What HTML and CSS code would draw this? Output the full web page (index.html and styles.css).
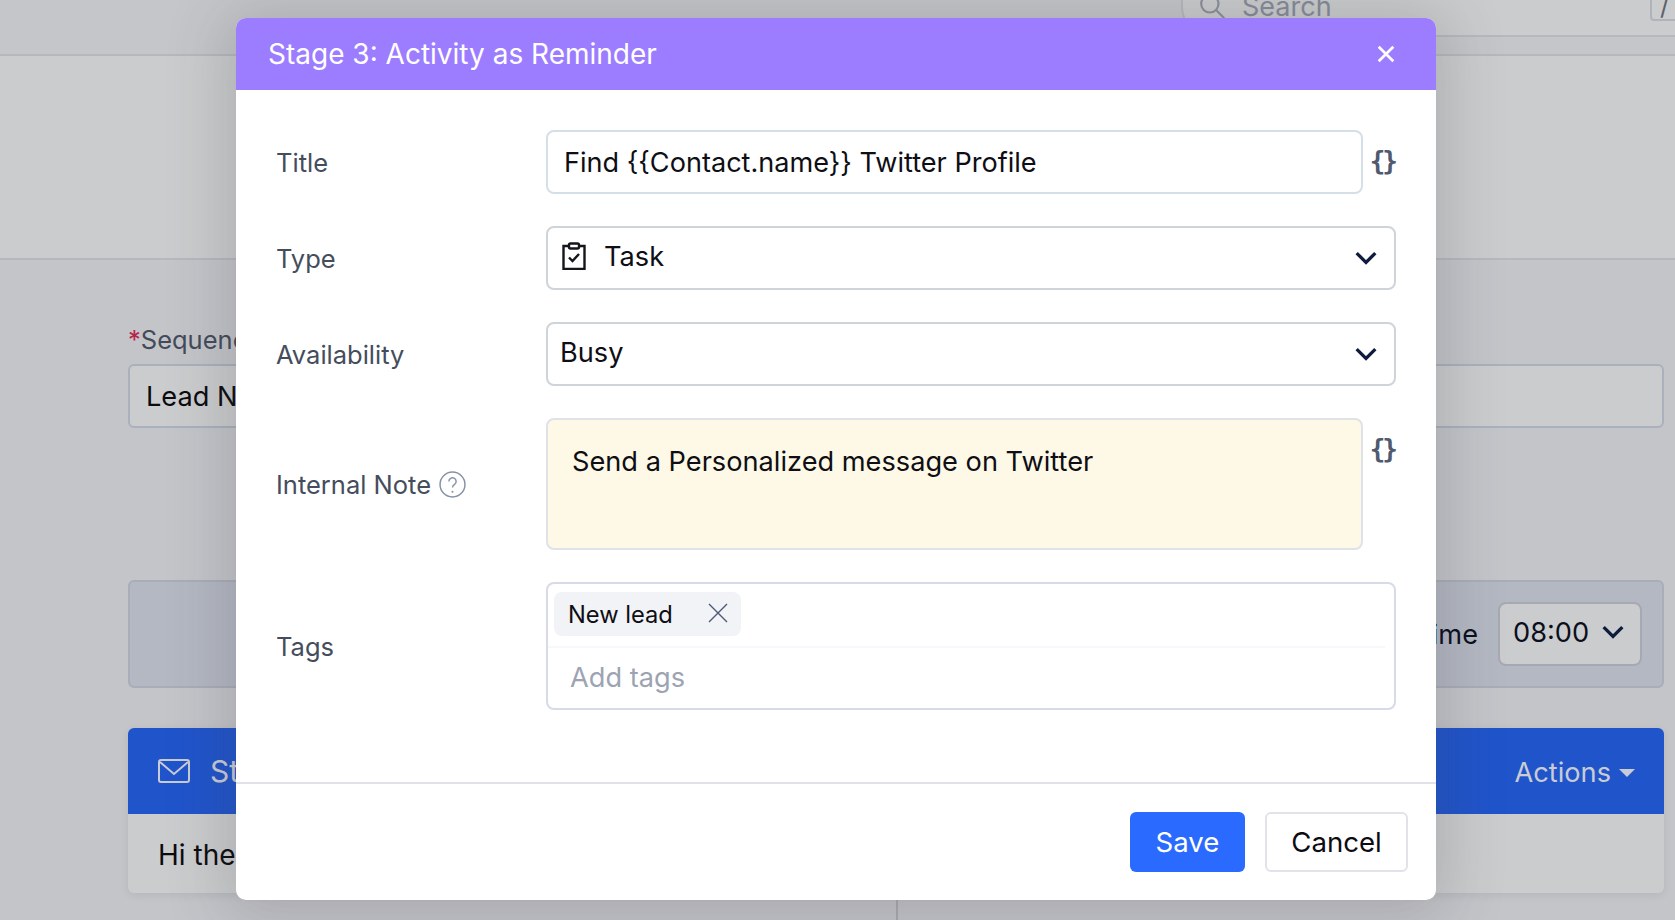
FILE: index.html
```html
<!DOCTYPE html>
<html lang="en">
<head>
<meta charset="utf-8">
<title>Stage 3: Activity as Reminder</title>
<link rel="stylesheet" href="styles.css">
</head>
<body>
<div class="page">
  <header class="topbar">
    <div class="search">
      <svg class="search-icon" viewBox="0 0 24 24"><circle cx="10" cy="10" r="8"/><path d="M16 16l8 8"/></svg>
      <span class="search-text">Search</span>
      <span class="kbd">/</span>
    </div>
  </header>
  <section class="hero"></section>
  <main class="content">
    <div class="seq-label"><span class="req">*</span>Sequence Name</div>
    <div class="seq-input">Lead Nurture</div>
    <div class="time-box">
      <span class="time-label">Time</span>
      <span class="time-select">08:00
        <svg class="chev" viewBox="0 0 20 20"><path d="M1.5 5.5l8.5 8.5 8.5-8.5"/></svg>
      </span>
    </div>
    <div class="card">
      <div class="card-head">
        <svg class="mail" viewBox="0 0 32 24"><rect x="1" y="1" width="30" height="22" rx="2"/><path d="M2 3l14 12L30 3"/></svg>
        <span class="card-title">Step 1</span>
        <span class="actions">Actions<span class="caret"></span></span>
      </div>
      <div class="card-body">Hi there</div>
    </div>
    <div class="divider"></div>
  </main>
</div>

<div class="modal">
  <div class="modal-head">
    <span class="modal-title">Stage 3: Activity as Reminder</span>
    <svg class="close" viewBox="0 0 16 16"><path d="M1.5 1.5l13 13M14.5 1.5l-13 13"/></svg>
  </div>
  <div class="modal-body">
    <div class="row">
      <label class="label">Title</label>
      <div class="field-wrap">
        <div class="field field-title">Find {{Contact.name}} Twitter Profile</div>
        <span class="braces">{}</span>
      </div>
    </div>
    <div class="row">
      <label class="label">Type</label>
      <div class="field field-select">
        <svg class="clip" viewBox="0 0 24 28"><path d="M7 4H1.5v23h21V4H17"/><rect x="7" y="1.5" width="10" height="5" rx="1.5"/><path d="M7 15.5l3.5 3.5 6.5-7"/></svg>
        <span>Task</span>
        <svg class="chev chev-end" viewBox="0 0 20 20"><path d="M1.5 5.5l8.5 8.5 8.5-8.5"/></svg>
      </div>
    </div>
    <div class="row">
      <label class="label">Availability</label>
      <div class="field field-select field-busy">
        <span>Busy</span>
        <svg class="chev chev-end" viewBox="0 0 20 20"><path d="M1.5 5.5l8.5 8.5 8.5-8.5"/></svg>
      </div>
    </div>
    <div class="row row-note">
      <label class="label label-note">Internal Note
        <svg class="help" viewBox="0 0 26 26"><circle cx="13" cy="13" r="12"/><path d="M9.5 10a3.5 3.5 0 1 1 5.5 2.9c-1.3.9-2 1.6-2 3.1"/><circle class="dot" cx="13" cy="20" r="1"/></svg>
      </label>
      <div class="field-wrap field-wrap-top">
        <div class="field field-note">Send a Personalized message on Twitter</div>
        <span class="braces braces-note">{}</span>
      </div>
    </div>
    <div class="row">
      <label class="label">Tags</label>
      <div class="field field-tags">
        <div class="tag-line">
          <span class="tag">New lead
            <svg class="tag-x" viewBox="0 0 20 20"><path d="M1 1l18 18M19 1L1 19"/></svg>
          </span>
        </div>
        <div class="tag-input">Add tags</div>
      </div>
    </div>
  </div>
  <div class="modal-foot">
    <button class="btn btn-save">Save</button>
    <button class="btn btn-cancel">Cancel</button>
  </div>
</div>
</body>
</html>
```

FILE: styles.css
```css
* { box-sizing: border-box; }
html, body { margin: 0; height: 920px; overflow: hidden; }
body { font-family: Inter, "Liberation Sans", sans-serif; background: #c4c5c9; color: #111; position: relative; }
.page { height: 920px; display: flex; flex-direction: column; background: #c4c5c9; }

.topbar { height: 56px; border-bottom: 2px solid #b6b8bd; background: #c5c6c9; padding-left: 1181px; flex: none; }
.search { height: 38px; margin-top: -1px; display: flex; align-items: flex-end; border: 2px solid #b6b8bd; border-top: 0; border-right: 0; border-radius: 0 0 0 30px; position: relative; padding-left: 18px; padding-bottom: 7px; background: #cbcccd; }
.search-icon { width: 26px; height: 26px; fill: none; stroke: #8a909b; stroke-width: 2; position: absolute; left: 16px; top: -6px; }
.search-text { position: absolute; left: 59px; top: -7px; font-size: 27px; line-height: 30px; color: #858b97; }
.kbd { position: absolute; left: 467px; top: -8px; width: 40px; height: 30px; border: 2px solid #b0b3b9; border-radius: 4px; color: #5a606c; font-size: 25px; padding-left: 8px; line-height: 26px; }

.hero { height: 204px; flex: none; background: #cbcccd; border-bottom: 2px solid #b6b8bd; }

.content { flex: 1; padding: 0 11px 0 128px; display: flex; flex-direction: column; }
.seq-label { font-size: 25.5px; line-height: 30px; color: #434b5a; margin-top: 65px; }
.req { color: #b8234a; }
.seq-input { height: 64px; margin-top: 9px; border: 2px solid #a9b1bc; border-radius: 6px; background: #cbcccd; font-size: 27.2px; line-height: 62px; padding-left: 16px; color: #0b0b0f; }
.time-box { height: 108px; margin-top: 152px; border: 2px solid #a8adb9; border-radius: 6px; background: #b4b8c2; display: flex; align-items: center; justify-content: flex-end; padding-right: 20px; gap: 20px; }
.time-label { font-size: 27.2px; color: #0b0f1c; }
.time-select { width: 144px; height: 64px; border: 2px solid #a6a9b1; border-radius: 8px; background: #cbcccd; font-size: 27.2px; display: flex; align-items: center; justify-content: space-between; padding: 0 16px 4px 13px; color: #0b0f1c; }
.chev { width: 22px; height: 22px; fill: none; stroke: #101c3c; stroke-width: 3; }
.card { margin-top: 40px; border-radius: 6px; background: #cbcccd; height: 165px; box-shadow: 0 2px 8px rgba(0,0,0,.08); }
.card-head { height: 86px; background: #2054cb; border-radius: 6px 6px 0 0; display: flex; align-items: center; padding: 0 30px; color: #c9ccd4; }
.mail { width: 32px; height: 24px; fill: none; stroke: #c9ccd4; stroke-width: 2; }
.card-title { margin-left: 20px; font-size: 30px; }
.actions { margin-left: auto; margin-right: -1px; padding-top: 3px; font-size: 27.2px; display: flex; align-items: center; gap: 8px; }
.caret { width: 0; height: 0; border: 8px solid transparent; border-top: 8px solid #c9ccd4; border-bottom: 0; }
.card-body { padding: 22px 30px; font-size: 28px; line-height: 38px; color: #0b0b0f; }
.divider { width: 2px; flex: 1; background: #a9abb1; margin-left: 768px; }

.modal { position: absolute; left: 236px; top: 18px; width: 1200px; height: 882px; background: #fff; border-radius: 10px; box-shadow: 0 6px 60px 12px rgba(60,62,72,.2); display: flex; flex-direction: column; }
.modal-head { height: 72px; flex: none; background: #9c7dff; border-radius: 10px 10px 0 0; display: flex; align-items: center; justify-content: space-between; padding: 0 41px 0 32px; }
.modal-title { color: #fff; font-size: 28px; font-weight: 400; }
.close { width: 18px; height: 18px; fill: none; stroke: #fff; stroke-width: 2.4; }
.modal-body { flex: 1; padding: 40px 40px 0 40px; display: flex; flex-direction: column; gap: 32px; }
.row { display: grid; grid-template-columns: 270px 1fr; align-items: center; }
.label { font-size: 25.5px; padding-top: 1px; color: #454d5d; display: flex; align-items: center; gap: 8px; }
.field-wrap { display: flex; }
.field-wrap-top { align-items: flex-start; }
.field { border: 2px solid #d5dfe8; border-radius: 8px; background: #fff; font-size: 27.2px; color: #0e0e14; }
.field-title { flex: 1; height: 64px; line-height: 62px; padding-left: 16px; font-size: 27.1px; }
.braces { width: 33px; text-align: right; padding-right: 1px; font-family: "DejaVu Sans Mono", monospace; font-weight: 700; font-size: 26px; color: #4f5a70; line-height: 62px; letter-spacing: -3px; }
.braces-note { line-height: 62px; }
.field-select { height: 64px; display: flex; align-items: center; gap: 18px; padding: 0 17px 4px 14px; border-color: #cfd3da; }
.field-busy { padding-left: 12px; }
.chev-end { margin-left: auto; margin-top: 4px; }
.clip { width: 24px; height: 28px; fill: none; stroke: #15151b; stroke-width: 2.4; }
.help { width: 27px; height: 27px; fill: none; stroke: #8690a6; stroke-width: 1.4; }
.help .dot { fill: #8690a6; stroke: none; }
.field-note { flex: 1; height: 132px; background: #fef8e6; border-color: #dfe2e8; padding: 22px 24px; line-height: 40px; }
.field-tags { height: 128px; border-color: #d7dbe8; padding: 8px 8px 0 6px; }
.tag-line { height: 54px; }
.tag { display: inline-flex; align-items: center; width: 187px; height: 44px; background: #f2f3f6; border-radius: 8px; font-size: 23.7px; padding: 0 13px 0 14px; justify-content: space-between; color: #0e0e14; }
.tag-x { width: 20px; height: 20px; fill: none; stroke: #4c5a78; stroke-width: 1.4; margin-top: -3px; }
.tag-input { height: 58px; border-top: 2px solid #f6f8fb; margin: 0 1px 0 -6px; padding-left: 22px; line-height: 60px; color: #9ca4b3; font-size: 27.2px; }
.modal-foot { height: 118px; flex: none; border-top: 2px solid #e1e2e9; display: flex; justify-content: flex-end; gap: 20px; padding: 28px 28px 0 0; }
.btn { height: 60px; border-radius: 6px; font-family: inherit; font-size: 27.6px; cursor: pointer; }
.btn-save { width: 115px; background: #2a6aff; border: 0; color: #fff; }
.btn-cancel { width: 143px; background: #fff; border: 2px solid #e2e3ea; color: #0c0c12; }
```
